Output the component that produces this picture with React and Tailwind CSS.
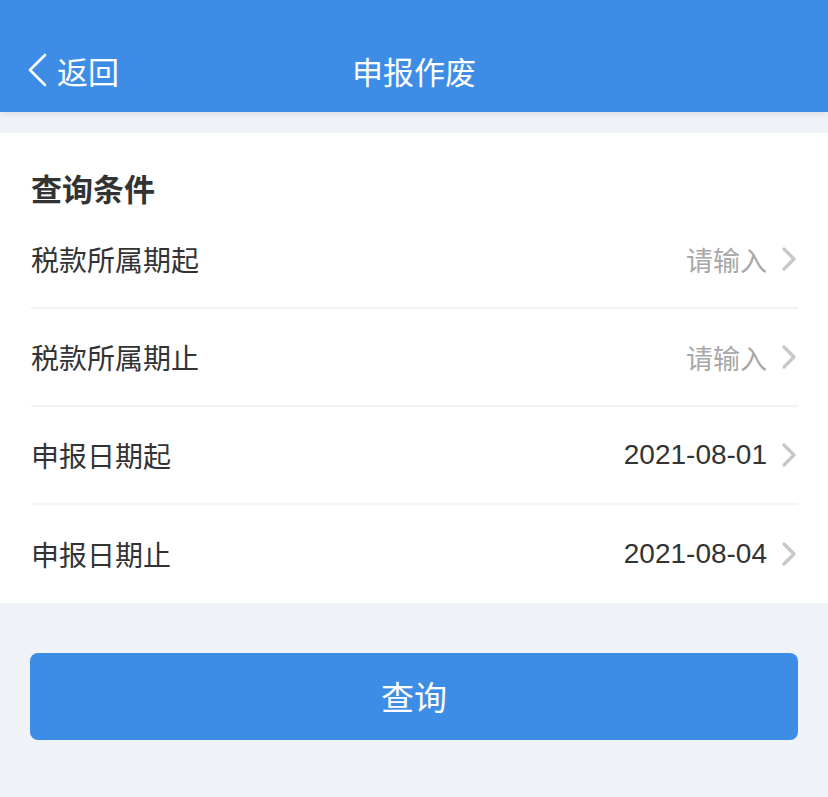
export default function App() {
  const rows = [
    { label: "税款所属期起", value: "请输入", placeholder: true },
    { label: "税款所属期止", value: "请输入", placeholder: true },
    { label: "申报日期起", value: "2021-08-01", placeholder: false },
    { label: "申报日期止", value: "2021-08-04", placeholder: false },
  ];
  const font = { fontFamily: '"Noto Sans CJK SC", "Noto Sans", sans-serif' };
  return (
    <div className="w-[828px] h-[797px] bg-[#eff3f7] flex flex-col" style={font}>
      <div className="h-[112px] bg-[#3d8de6] relative flex items-center shadow-[0_3px_6px_rgba(0,0,0,0.08)] z-10">
        <div className="flex items-center pl-[27px] pt-[28px] gap-[10px]">
          <svg width="20" height="34" viewBox="0 0 20 34">
            <path d="M18 2 L3 17 L18 32" fill="none" stroke="#fff" strokeWidth="2.6" strokeLinecap="round" strokeLinejoin="round" />
          </svg>
          <span className="text-white text-[31px] leading-none">返回</span>
        </div>
        <div className="absolute left-0 right-0 top-[28px] bottom-0 flex items-center justify-center">
          <span className="text-white text-[31px] leading-none">申报作废</span>
        </div>
      </div>
      <div className="h-[21px]" />
      <div className="bg-white">
        <div className="pl-[31px] pt-[35px] h-[78px]">
          <div className="text-[31px] leading-[40px] font-bold text-[#333]">查询条件</div>
        </div>
        <div className="pl-[31px] pr-[30px]">
          {rows.map((r, i) => (
            <div
              key={i}
              className={
                "h-[98px] flex items-center justify-between " +
                (i < rows.length - 1 ? "border-b-2 border-[#f3f3f3]" : "")
              }
            >
              <span className="text-[28px] text-[#333] leading-none">{r.label}</span>
              <div className="flex items-center gap-[13px]">
                {r.placeholder ? (
                  <span className="text-[27px] text-[#a8a8a8] leading-none">{r.value}</span>
                ) : (
                  <span className="text-[28px] text-[#333] leading-none" style={{ fontFamily: '"Liberation Sans", Arial, sans-serif' }}>
                    {r.value}
                  </span>
                )}
                <svg width="18" height="26" viewBox="0 0 18 26">
                  <path d="M4 3 L14 13 L4 23" fill="none" stroke="#c8c8c8" strokeWidth="3.4" strokeLinecap="round" strokeLinejoin="round" />
                </svg>
              </div>
            </div>
          ))}
        </div>
      </div>
      <div className="px-[30px] pt-[50px]">
        <div className="h-[87px] rounded-[8px] bg-[#3d8de6] flex items-center justify-center">
          <span className="text-white text-[33px] leading-none">查询</span>
        </div>
      </div>
    </div>
  );
}
